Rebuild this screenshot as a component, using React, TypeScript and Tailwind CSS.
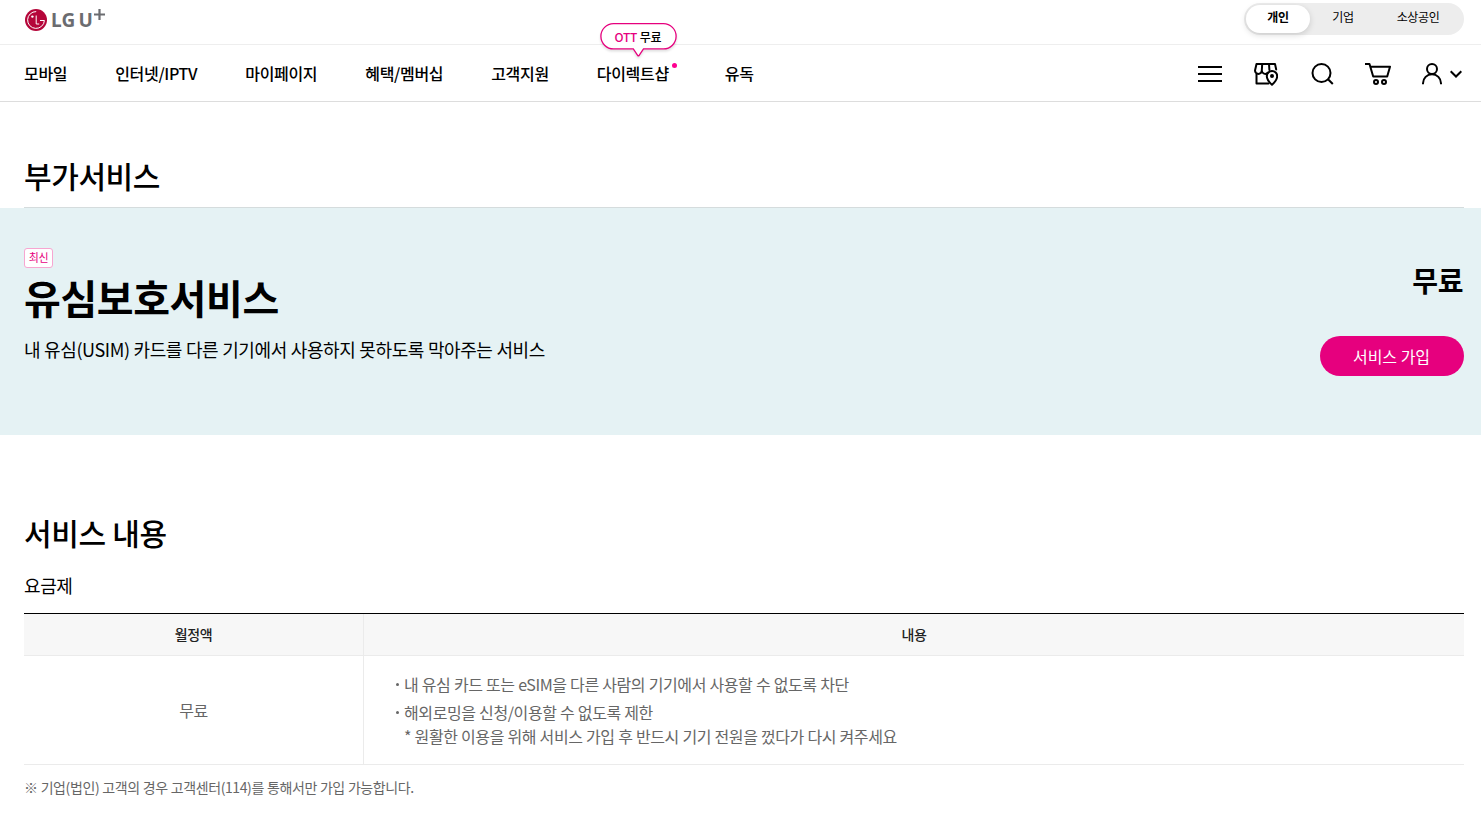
import React from "react";

const menus = ["모바일", "인터넷/IPTV", "마이페이지", "혜택/멤버십", "고객지원", "다이렉트샵", "유독"];

function Logo() {
  return (
    <a href="#" aria-label="LG U+" className="flex h-6 items-start text-[#6b6c70]">
      <svg width="24" height="24" viewBox="0 0 24 24" fill="none">
        <circle cx="12" cy="12" r="11" fill="#b5063a" />
        <path d="M12.2 3.6A8.4 8.4 0 1 0 20.4 12.5H16" stroke="#fff" strokeWidth="1" />
        <path d="M12.2 7.5v8.500h3" stroke="#fff" strokeWidth="1" />
        <circle cx="8.4" cy="8.6" r="1.2" fill="#fff" />
      </svg>
      <span className="ml-[3px] mt-[2px] font-['Noto_Sans'] text-[19px] leading-[20px] font-bold tracking-[0.2px]">LG</span>
      <span className="ml-[3px] mt-[2px] font-['Noto_Sans'] text-[19px] leading-[20px] font-bold">U</span>
      <svg width="11" height="11" viewBox="0 0 11 11" className="ml-[2px] mt-px">
        <path d="M5.500 0v11M0 5.500h11" stroke="#6b6c70" strokeWidth="2.200" />
      </svg>
    </a>
  );
}

function HeaderIcons() {
  return (
    <div className="flex items-center gap-8 pt-[2px]">
      <svg width="24" height="24" viewBox="0 0 24 24" stroke="#000" strokeWidth="2">
        <path d="M0 5h24M0 12h24M0 19h24" />
      </svg>
      <svg width="24" height="24" viewBox="0 0 24 24" fill="none" stroke="#000" strokeWidth="2" strokeLinecap="round" strokeLinejoin="round">
        <path d="M2.500 2h18.500l1.200 5.500M2.500 2L1 8.500a3.400 3.400 0 0 0 6.800 0a3.500 3.500 0 0 0 6 2.300M8.200 2l-.4 6.500M15 2l.4 6" />
        <path d="M2.500 12v9.500h12" />
        <path d="M18 9a5.200 5.200 0 0 0-5.200 5.200C12.800 18 18 22.800 18 22.800S23.200 18 23.200 14.200A5.200 5.200 0 0 0 18 9z" />
        <circle cx="18" cy="14" r="1" fill="#000" />
      </svg>
      <svg width="24" height="24" viewBox="0 0 24 24" fill="none" stroke="#000" strokeWidth="2">
        <circle cx="11.500" cy="11" r="9" />
        <path d="M17.800 17l5 5" />
      </svg>
      <svg width="26" height="24" viewBox="0 0 26 24" fill="none" stroke="#000" strokeWidth="2" strokeLinejoin="round" className="-ml-px">
        <path d="M0 2h4.500l3.700 12.500h14L25 4.800H5.500" />
        <circle cx="11" cy="20" r="2" />
        <circle cx="19" cy="20" r="2" />
      </svg>
      <div className="-ml-px flex items-center gap-2">
        <svg width="20" height="24" viewBox="0 0 20 24" fill="none" stroke="#000" strokeWidth="2">
          <circle cx="10" cy="7" r="5" />
          <path d="M1 22.200v-1a9 9 0 0 1 18 0v1" />
        </svg>
        <svg width="12" height="8" viewBox="0 0 12 8" fill="none" stroke="#000" strokeWidth="2">
          <path d="M.7 1.200L6 6.500l5.300-5.300" />
        </svg>
      </div>
    </div>
  );
}

function OttBubble() {
  return (
    <div className="absolute -top-[38px] left-[3px] h-[36px] w-[78px]">
      <svg width="78" height="38" viewBox="0 0 78 38" className="absolute inset-0 drop-shadow-[0_2px_1px_rgba(0,0,0,0.12)]">
        <path
          d="M13.500 .7h50a12.600 12.600 0 0 1 0 25.200h-20l-4.500 6.600q-.6.800-1.200 0l-4.500-6.600h-19.800a12.600 12.600 0 0 1 0-25.200z"
          fill="#fff"
          stroke="#e6007e"
          strokeWidth="1.300"
        />
      </svg>
      <p className="relative w-[76px] pt-px text-center text-xs leading-[26px] font-medium tracking-[-0.3px]">
        <span className="text-[#e6007e]">OTT</span> 무료
      </p>
    </div>
  );
}

function Header() {
  return (
    <header>
      <div className="flex h-[45px] items-start justify-between border-b border-[#eee] pl-6 pr-[17px]">
        <div className="pt-2">
          <Logo />
        </div>
        <div className="mt-[3px] flex h-8 w-[220px] items-center rounded-full bg-[#ededed] text-xs">
          <span className="ml-[2px] flex h-7 w-16 items-center justify-center rounded-full bg-white pb-1 font-bold shadow-[0_2px_6px_rgba(0,0,0,0.15)]">개인</span>
          <span className="w-[66px] pb-1 text-center">기업</span>
          <span className="w-[84px] pb-1 text-center">소상공인</span>
        </div>
      </div>
      <div className="flex h-[57px] items-center justify-between border-b border-[#ddd] pl-6 pr-[19px]">
        <nav>
          <ul className="flex gap-x-12 text-base font-medium tracking-[-0.32px]">
            {menus.map((menu) => (
              <li key={menu} className="relative last:ml-2">
                <a href="#">{menu}</a>
                {menu === "다이렉트샵" && (
                  <>
                    <OttBubble />
                    <span className="absolute left-[75px] top-[2px] h-[5px] w-[5px] rounded-full bg-[#ff0090]"></span>
                  </>
                )}
              </li>
            ))}
          </ul>
        </nav>
        <HeaderIcons />
      </div>
    </header>
  );
}

function Banner() {
  return (
    <section className="flex h-[227px] justify-between bg-[#e5f2f4] pl-6 pr-[17px] pt-10">
      <div>
        <span className="flex h-5 w-[29px] items-center justify-center rounded-[3px] border border-[#f7a6d1] bg-white pb-px text-[11px] text-[#e6007e]">최신</span>
        <h2 className="text-[40px] leading-[58px] font-bold">유심보호서비스</h2>
        <p className="mt-[10px] text-lg leading-[26px]">내 유심(USIM) 카드를 다른 기기에서 사용하지 못하도록 막아주는 서비스</p>
      </div>
      <div className="flex flex-col items-end pt-[12px]">
        <strong className="mr-px text-[28px] leading-10 font-bold">무료</strong>
        <button className="mt-[36px] h-10 w-36 rounded-full bg-[#e6007e] pr-px text-base tracking-normal text-white">서비스 가입</button>
      </div>
    </section>
  );
}

function PlanTable() {
  return (
    <table className="w-full table-fixed border-separate border-spacing-0 border-t border-black">
      <thead>
        <tr className="h-[42px] bg-[#f7f7f7] text-sm text-[#222]">
          <th className="w-[340px] border-b border-r border-[#ebebeb] pb-[2px] font-medium">월정액</th>
          <th className="border-b border-[#ebebeb] pb-[2px] font-medium">내용</th>
        </tr>
      </thead>
      <tbody>
        <tr className="h-[109px] text-base text-[#666]">
          <td className="border-b border-r border-[#ebebeb] text-center">무료</td>
          <td className="border-b border-[#ebebeb] pl-8">
            <ul>
              <li className="flex items-center">
                <span className="mr-[5px] h-[3px] w-[3px] rounded-full bg-[#666]"></span>내 유심 카드 또는 eSIM을 다른 사람의 기기에서 사용할 수 없도록 차단
              </li>
              <li className="mt-1 flex items-center">
                <span className="mr-[5px] h-[3px] w-[3px] rounded-full bg-[#666]"></span>해외로밍을 신청/이용할 수 없도록 제한
              </li>
            </ul>
            <p className="pl-2">* 원활한 이용을 위해 서비스 가입 후 반드시 기기 전원을 껐다가 다시 켜주세요</p>
          </td>
        </tr>
      </tbody>
    </table>
  );
}

export default function App() {
  return (
    <div className="h-[840px] overflow-hidden bg-white font-['Noto_Sans_CJK_KR',sans-serif] tracking-[-0.4px] text-black [word-spacing:0.3px]">
      <Header />
      <main>
        <h1 className="ml-6 mr-[17px] h-[106px] border-b border-[#d5dcdd] pt-[51px] text-[30px] leading-[44px] font-medium">부가서비스</h1>
        <Banner />
        <section className="pl-6 pr-[17px] pt-[75px]">
          <h2 className="text-[30px] leading-[44px] font-medium">서비스 내용</h2>
          <h3 className="mb-[15px] mt-[18px] text-lg leading-[26px]">요금제</h3>
          <PlanTable />
          <p className="mt-3 text-sm text-[#666]">※ 기업(법인) 고객의 경우 고객센터(114)를 통해서만 가입 가능합니다.</p>
        </section>
      </main>
    </div>
  );
}
